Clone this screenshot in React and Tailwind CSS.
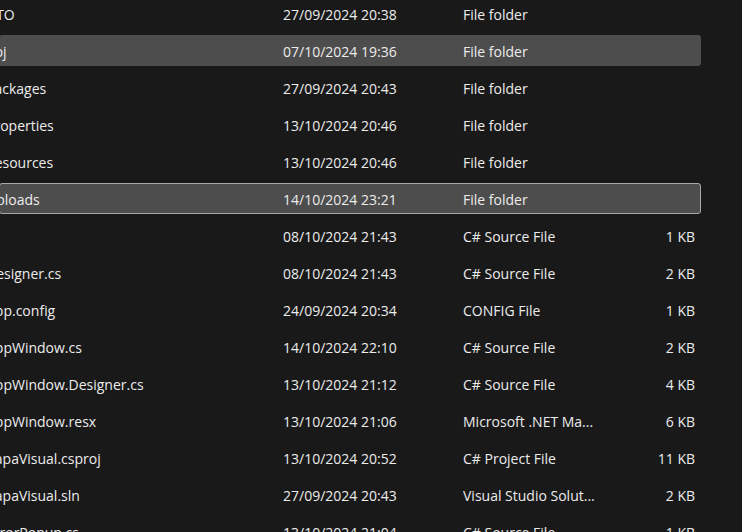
import React from "react";

// Explorer-style details view, dark theme
const rows = [
  { name: "DTO", date: "27/09/2024 20:38", type: "File folder", size: "" },
  { name: "obj", date: "07/10/2024 19:36", type: "File folder", size: "", state: "hover" },
  { name: "Packages", date: "27/09/2024 20:43", type: "File folder", size: "" },
  { name: "Properties", date: "13/10/2024 20:46", type: "File folder", size: "" },
  { name: "Resources", date: "13/10/2024 20:46", type: "File folder", size: "" },
  { name: "Uploads", date: "14/10/2024 23:21", type: "File folder", size: "", state: "selected" },
  { name: "", date: "08/10/2024 21:43", type: "C# Source File", size: "1 KB" },
  { name: "Designer.cs", date: "08/10/2024 21:43", type: "C# Source File", size: "2 KB" },
  { name: "App.config", date: "24/09/2024 20:34", type: "CONFIG File", size: "1 KB" },
  { name: "AppWindow.cs", date: "14/10/2024 22:10", type: "C# Source File", size: "2 KB" },
  { name: "AppWindow.Designer.cs", date: "13/10/2024 21:12", type: "C# Source File", size: "4 KB" },
  { name: "AppWindow.resx", date: "13/10/2024 21:06", type: "Microsoft .NET Ma...", size: "6 KB" },
  { name: "CapaVisual.csproj", date: "13/10/2024 20:52", type: "C# Project File", size: "11 KB" },
  { name: "CapaVisual.sln", date: "27/09/2024 20:43", type: "Visual Studio Solut...", size: "2 KB" },
  { name: "ErrorPopup.cs", date: "13/10/2024 21:04", type: "C# Source File", size: "1 KB" },
];

function Row({ row }) {
  let look = "border border-transparent";
  if (row.state === "hover") look = "bg-[#4d4d4d] border border-transparent";
  if (row.state === "selected") look = "bg-[#4d4d4d] border border-[#a8a8a8]";

  return (
    <div className={`flex items-center pt-px h-[31px] w-[702px] shrink-0 rounded-[3px] ${look}`}>
      <div className="w-[283px] shrink-0 overflow-hidden whitespace-nowrap">
        <span className="block -ml-[14px]">{row.name}</span>
      </div>
      <div className="w-[180px] shrink-0 whitespace-nowrap">{row.date}</div>
      <div className="w-[150px] shrink-0 whitespace-nowrap overflow-hidden">{row.type}</div>
      <div className="flex-1 text-right pr-[5px] whitespace-nowrap">{row.size}</div>
    </div>
  );
}

export default function App() {
  return (
    <div
      className="w-[742px] h-[532px] overflow-hidden bg-[#191919] text-[#ececec] text-[14px]"
      style={{ fontFamily: '"Open Sans", "Noto Sans", sans-serif' }}
    >
      <div className="flex flex-col gap-[6px] -mt-[2px] -ml-px">
        {rows.map((r, i) => (
          <Row key={i} row={r} />
        ))}
      </div>
    </div>
  );
}
